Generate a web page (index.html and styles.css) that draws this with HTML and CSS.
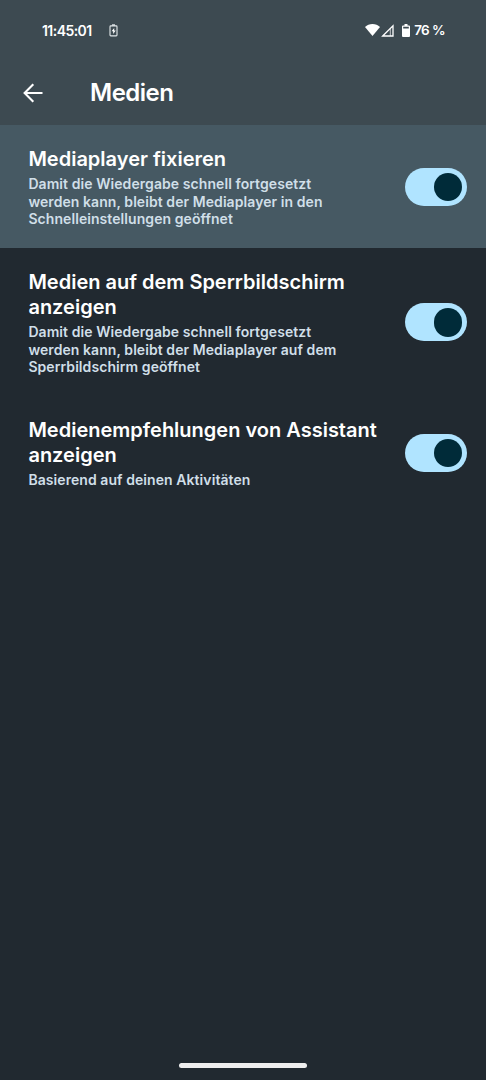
FILE: index.html
```html
<!DOCTYPE html>
<html lang="de">
<head>
  <meta charset="UTF-8" />
  <meta name="viewport" content="width=device-width, initial-scale=1.0" />
  <title>Medien</title>
  <link rel="stylesheet" href="styles.css">
</head>
<body>
  <header class="header">
    <!-- Statusleiste -->
    <div class="statusbar">
      <span class="clock">11:45:01</span>
      <svg class="icon-charging" width="9" height="13" viewBox="0 0 9 13">
        <path d="M3 1h3" stroke="#e4e9eb" stroke-width="1.4" />
        <rect x="1" y="1.9" width="7" height="10" rx="0.8" fill="none" stroke="#e4e9eb" stroke-width="1.1" />
        <path d="M5.2 4 2.6 7.3h1.6v2.6l2.5-3.4H5.2z" fill="#fff" />
      </svg>
      <div class="status-right">
        <svg class="icon-wifi" width="15" height="12" viewBox="0 0 15 12">
          <path d="M7.5 12 0 3C2 1.1 4.6 0 7.5 0S13 1.1 15 3z" fill="#fff" />
        </svg>
        <svg class="icon-signal" width="13" height="13" viewBox="0 0 13 13">
          <path d="M1.7 12 12 1.7V12z" fill="none" stroke="#fff" stroke-width="1.3" />
          <path d="M9.3 5v7" stroke="#fff" stroke-width="0.7" />
        </svg>
        <svg class="icon-battery" width="8" height="13" viewBox="0 0 8 13">
          <path d="M2.5 0h3v1.4H7a1 1 0 0 1 1 1V12a1 1 0 0 1-1 1H1a1 1 0 0 1-1-1V2.4a1 1 0 0 1 1-1h1.5zM1.2 2.7v1.7h5.6V2.7z" fill="#fff" fill-rule="evenodd" />
        </svg>
        <span class="percent">76 %</span>
      </div>
    </div>

    <!-- Titelzeile -->
    <div class="toolbar">
      <svg class="icon-back" width="20" height="20" viewBox="0 0 20 20">
        <path d="M19.5 10H2M10.3 1.2 1.6 10l8.7 8.8" fill="none" stroke="#fff" stroke-width="2.1" />
      </svg>
      <h1>Medien</h1>
    </div>
  </header>

  <!-- Einstellungen -->
  <main class="settings">
    <div class="setting active">
      <div class="setting-text">
        <h2>Mediaplayer fixieren</h2>
        <p>Damit die Wiedergabe schnell fortgesetzt<br>werden kann, bleibt der Mediaplayer in den<br>Schnelleinstellungen geöffnet</p>
      </div>
      <div class="switch"><div class="thumb"></div></div>
    </div>
    <div class="setting">
      <div class="setting-text">
        <h2>Medien auf dem Sperrbildschirm<br>anzeigen</h2>
        <p>Damit die Wiedergabe schnell fortgesetzt<br>werden kann, bleibt der Mediaplayer auf dem<br>Sperrbildschirm geöffnet</p>
      </div>
      <div class="switch"><div class="thumb"></div></div>
    </div>
    <div class="setting">
      <div class="setting-text">
        <h2>Medienempfehlungen von Assistant<br>anzeigen</h2>
        <p>Basierend auf deinen Aktivitäten</p>
      </div>
      <div class="switch"><div class="thumb"></div></div>
    </div>
  </main>

  <div class="navbar"><div class="handle"></div></div>
</body>
</html>
```
FILE: styles.css
```css
:root {
  --bg: #212930;
  --header: #3d4a51;
  --active: #465963;
  --text: #ffffff;
  --text-soft: #d0dfe8;
  --switch: #b0e4ff;
  --thumb: #002b39;
}

* {
  box-sizing: border-box;
}

body {
  margin: 0;
  height: 1080px;
  display: flex;
  flex-direction: column;
  background: var(--bg);
  color: var(--text);
  font-family: Inter, Roboto, sans-serif;
}

h1, h2, p {
  margin: 0;
}

svg {
  display: block;
  flex: none;
}

.header {
  height: 125.4px;
  background: var(--header);
}

.statusbar {
  display: flex;
  align-items: center;
  height: 60px;
  padding: 0 41.5px 0 42px;
  font-size: 14px;
  font-weight: 600;
}

.clock {
  width: 67px;
  letter-spacing: -0.55px;
}

.status-right {
  display: flex;
  align-items: center;
  margin-left: auto;
}

.icon-signal {
  margin-left: 1px;
}

.icon-battery {
  margin-left: 8px;
}

.percent {
  margin-left: 4.5px;
  font-size: 13.5px;
  letter-spacing: -1px;
  word-spacing: 1px;
}

.toolbar {
  display: flex;
  align-items: center;
  height: 65px;
  padding-left: 23px;
}

h1 {
  margin-left: 47px;
  font-size: 24px;
  line-height: 30px;
  font-weight: 600;
  letter-spacing: -0.5px;
}

.setting {
  display: flex;
  align-items: center;
  justify-content: space-between;
  padding: 22.75px 19px 22.75px 28.4px;
}

.setting.active {
  background: var(--active);
}

.setting-text {
  /* keeps the row height independent of the gap under the heading */
  margin: -1px 0 -2px;
  white-space: nowrap;
}

h2 {
  margin-bottom: 3px;
  font-size: 20px;
  line-height: 25px;
  font-weight: 600;
}

p {
  color: var(--text-soft);
  font-size: 14px;
  line-height: 17.5px;
  font-weight: 600;
  letter-spacing: 0.07px;
}

.switch {
  display: flex;
  align-items: center;
  justify-content: flex-end;
  width: 61.6px;
  height: 38px;
  padding-right: 5px;
  border-radius: 19px;
  background: var(--switch);
}

.thumb {
  width: 28.5px;
  height: 28.5px;
  border-radius: 50%;
  background: var(--thumb);
}

.navbar {
  display: flex;
  justify-content: center;
  margin-top: auto;
  padding-bottom: 12px;
}

.handle {
  width: 128px;
  height: 5px;
  border-radius: 3px;
  background: #eeeeee;
}
```
